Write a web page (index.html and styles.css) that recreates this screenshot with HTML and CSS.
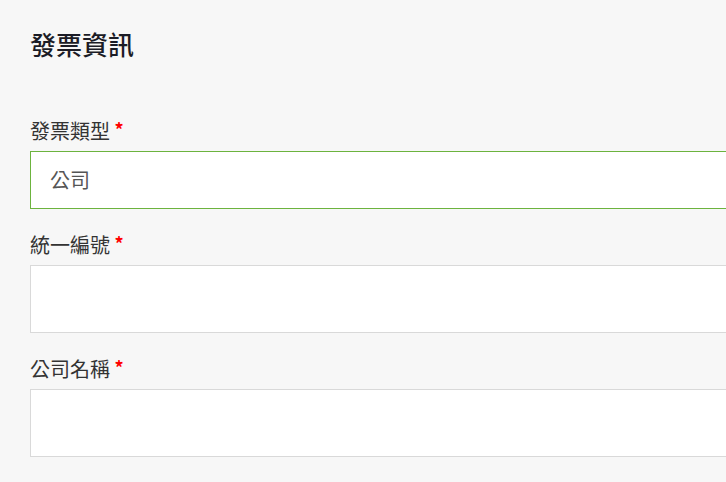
FILE: index.html
```html
<!DOCTYPE html>
<html lang="zh-Hant">
<head>
    <meta charset="UTF-8">
    <meta name="viewport" content="width=device-width, initial-scale=1.0">
    <title>發票資訊</title>
    <link rel="stylesheet" href="styles.css">
</head>
<body>
    <div class="invoice-form">
        <h2>發票資訊</h2>
        <form>
            <div class="field">
                <label for="invoice-type">發票類型 <span class="required">*</span></label>
                <div class="select-box active" id="invoice-type">公司</div>
            </div>
            <div class="field">
                <label for="tax-id">統一編號 <span class="required">*</span></label>
                <input type="text" id="tax-id" class="text-box">
            </div>
            <div class="field">
                <label for="company">公司名稱 <span class="required">*</span></label>
                <input type="text" id="company" class="text-box">
            </div>
        </form>
    </div>
</body>
</html>
```

FILE: styles.css
```css
html, body {
    margin: 0;
    padding: 0;
    overflow: hidden;
}

body {
    font-family: "Noto Sans CJK TC", "Noto Sans", sans-serif;
    background-color: #f7f7f7;
}

.invoice-form {
    width: 760px;
    padding: 27px 0 0 30px;
}

h2 {
    margin: 0 0 56px;
    font-size: 26px;
    line-height: 34px;
    font-weight: 500;
    color: #1b1c26;
}

.field {
    margin-bottom: 22px;
}

label {
    display: block;
    margin-bottom: 8px;
    font-size: 20px;
    line-height: 24px;
    color: #333;
}

.required {
    color: #f00;
    font-size: 18px;
    font-weight: 700;
    vertical-align: 2px;
}

.select-box,
.text-box {
    display: block;
    box-sizing: border-box;
    width: 100%;
    background-color: #fff;
    border: 1px solid #d9d9d9;
    font-family: inherit;
}

.select-box {
    height: 58px;
    padding: 0 19px;
    font-size: 20px;
    line-height: 56px;
    color: #555;
}

.select-box.active {
    border-color: #6cb33e;
}

.text-box {
    height: 68px;
    padding: 0 19px;
    font-size: 20px;
    outline: none;
}
```
